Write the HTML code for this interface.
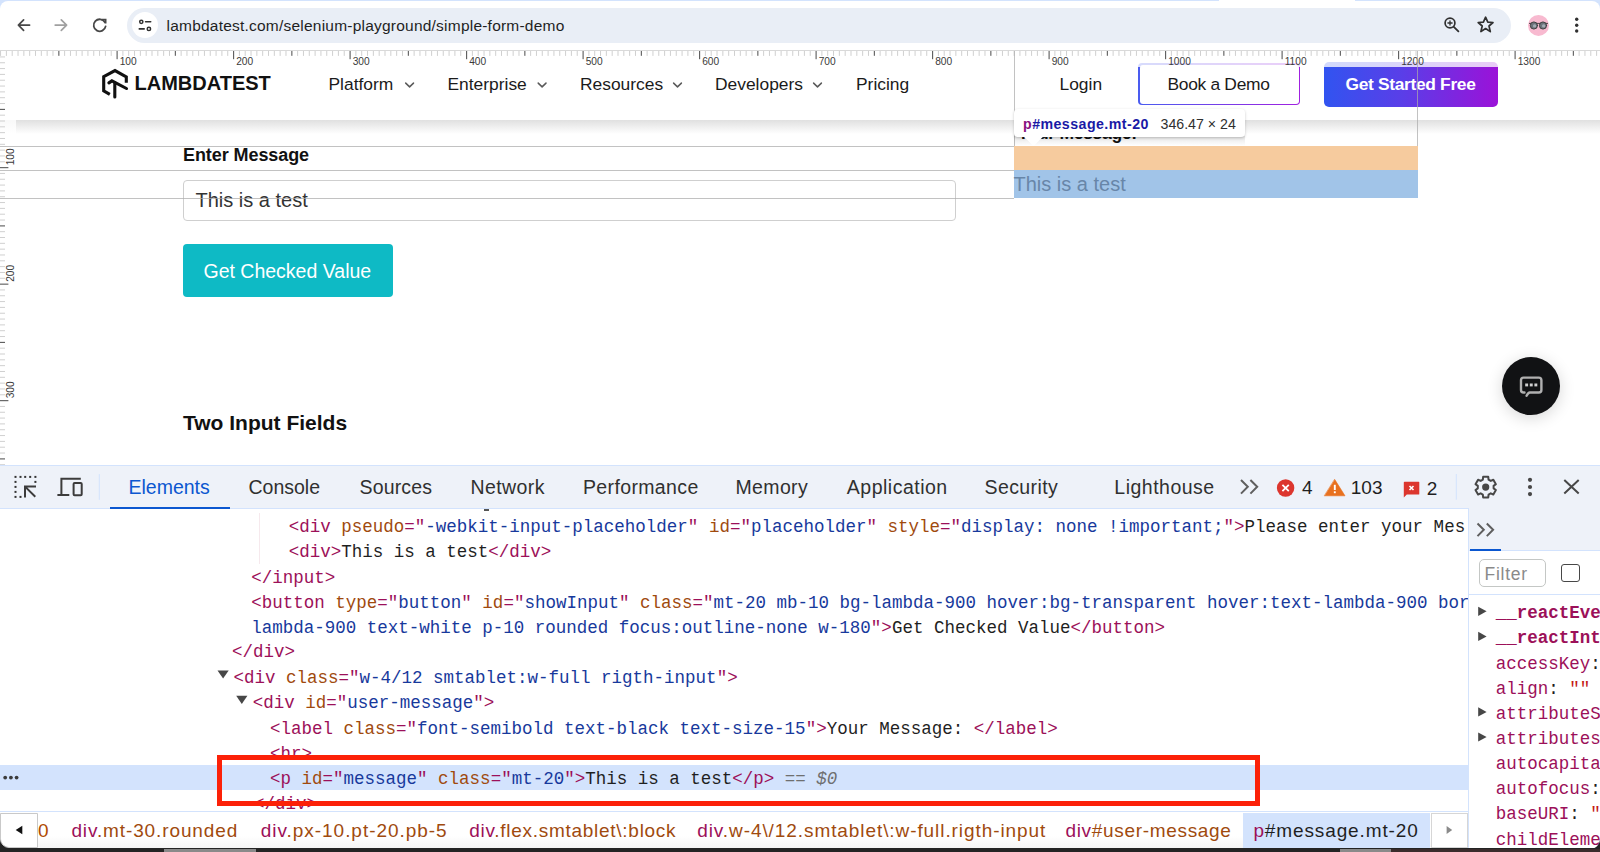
<!DOCTYPE html>
<html><head><meta charset="utf-8">
<style>
*{box-sizing:border-box;margin:0;padding:0}
html,body{width:1600px;height:852px;overflow:hidden;background:#fff}
body{position:relative;font-family:"Liberation Sans",sans-serif;color:#1f1f1f}
.a{position:absolute}
.t{position:absolute;white-space:pre;line-height:normal}
.m{position:absolute;white-space:pre;line-height:normal;font-family:"Liberation Mono",monospace;font-size:17.5px;color:#1f1f1f}
.tg{color:#9c1059}
.at{color:#a04a0e}
.av{color:#17399c}
svg{position:absolute;overflow:visible}
</style></head>
<body>
<!-- ============ BROWSER CHROME ============ -->
<div class="a" style="left:0;top:0;width:1600px;height:10px;background:#d3e3fd"></div>
<div class="a" style="left:0;top:1px;width:1600px;height:50px;background:#fff;border-radius:8px 8px 0 0"></div>
<div class="a" style="left:1218.5px;top:0;width:136px;height:2px;background:#fff"></div>
<div class="a" id="omni" style="left:127px;top:7.5px;width:1384px;height:35.5px;border-radius:18px;background:#e9eef6"></div>
<div class="a" style="left:131.5px;top:12.25px;width:26px;height:26px;border-radius:13px;background:#fff"></div>
<div class="t" id="url" style="left:166.5px;top:16.7px;font-size:15.5px;letter-spacing:0.22px;color:#1f1f1f">lambdatest.com/selenium-playground/simple-form-demo</div>

<!-- ============ PAGE ============ -->
<div id="page">
  <!-- header -->
  <div class="a" style="left:0;top:119.5px;width:1600px;height:14px;background:linear-gradient(#e0e0e0,rgba(255,255,255,0))"></div>
  <div class="t" id="logo" style="left:134.5px;top:71.6px;font-size:20px;font-weight:700;color:#111">LAMBDATEST</div>
  <div class="t nav" style="left:328.5px;top:74px;font-size:17.4px;color:#1b1b1b">Platform</div>
  <div class="t nav" style="left:447.5px;top:74px;font-size:17.4px;color:#1b1b1b">Enterprise</div>
  <div class="t nav" style="left:580px;top:74px;font-size:17.4px;color:#1b1b1b">Resources</div>
  <div class="t nav" style="left:715px;top:74px;font-size:17.4px;color:#1b1b1b">Developers</div>
  <div class="t nav" style="left:856px;top:74px;font-size:17.4px;color:#1b1b1b">Pricing</div>
  <div class="t" style="left:1059.5px;top:74px;font-size:17.4px;color:#1b1b1b">Login</div>
  <div class="a" style="left:1138px;top:63px;width:162px;height:42px;border-radius:4px;background:linear-gradient(90deg,#4a5cf0,#a020e0);padding:1.5px"><div style="width:100%;height:100%;background:#fff;border-radius:3px"></div></div>
  <div class="t" style="left:1167.5px;top:74px;font-size:17.4px;letter-spacing:-0.3px;color:#1b1b1b">Book a Demo</div>
  <div class="a" style="left:1324px;top:61.5px;width:174px;height:45px;border-radius:5px;background:linear-gradient(90deg,#3154f0,#5a3ee8 45%,#9b12d8)"></div>
  <div class="t" style="left:1345.5px;top:74px;font-size:17.4px;font-weight:700;letter-spacing:-0.33px;color:#fff">Get Started Free</div>

  <!-- content -->
  <div class="t" style="left:183px;top:145.2px;font-size:18px;font-weight:700;letter-spacing:-0.08px;color:#111">Enter Message</div>
  <div class="a" style="left:183px;top:180px;width:772.5px;height:40.5px;border:1px solid #cfcfcf;border-radius:4px"></div>
  <div class="t" style="left:195.5px;top:188.5px;font-size:20px;color:#333">This is a test</div>
  <div class="a" style="left:183px;top:244px;width:209.5px;height:53px;border-radius:4px;background:#0ebac5"></div>
  <div class="t" style="left:203.5px;top:259.5px;font-size:19.5px;color:#fff">Get Checked Value</div>
  <div class="t" style="left:183px;top:410.5px;font-size:21px;font-weight:700;color:#111">Two Input Fields</div>

  <!-- chat button -->
  <div class="a" style="left:1502.3px;top:357.3px;width:58px;height:58px;border-radius:50%;background:#111214;box-shadow:0 3px 16px rgba(0,0,0,0.16)"></div>
</div>

<!-- ============ INSPECT OVERLAY ============ -->
<div id="overlay">
<div class="a" style="left:0;top:50.5px;width:1600px;height:16.3px;background:rgba(255,255,255,0.78)"></div>
<div class="a" style="left:0;top:66.8px;width:16px;height:398px;background:rgba(255,255,255,0.78)"></div>
<svg style="left:0;top:0" width="1600" height="466" shape-rendering="auto"><rect x="0" y="50" width="1600" height="1" fill="#d9d9d9"/><rect x="0.05" y="51" width="1" height="4.9" fill="#d0d0d0"/><rect x="5.88" y="51" width="1" height="4.9" fill="#d0d0d0"/><rect x="11.70" y="51" width="1" height="4.9" fill="#d0d0d0"/><rect x="17.53" y="51" width="1" height="4.9" fill="#d0d0d0"/><rect x="23.35" y="51" width="1" height="4.9" fill="#d0d0d0"/><rect x="29.18" y="51" width="1" height="4.9" fill="#d0d0d0"/><rect x="35.00" y="51" width="1" height="4.9" fill="#d0d0d0"/><rect x="40.82" y="51" width="1" height="4.9" fill="#d0d0d0"/><rect x="46.65" y="51" width="1" height="4.9" fill="#d0d0d0"/><rect x="52.48" y="51" width="1" height="4.9" fill="#d0d0d0"/><rect x="58.30" y="51" width="1.1" height="4.8" fill="#5a5a5a"/><rect x="64.12" y="51" width="1" height="4.9" fill="#d0d0d0"/><rect x="69.95" y="51" width="1" height="4.9" fill="#d0d0d0"/><rect x="75.78" y="51" width="1" height="4.9" fill="#d0d0d0"/><rect x="81.60" y="51" width="1" height="4.9" fill="#d0d0d0"/><rect x="87.42" y="51" width="1" height="4.9" fill="#d0d0d0"/><rect x="93.25" y="51" width="1" height="4.9" fill="#d0d0d0"/><rect x="99.08" y="51" width="1" height="4.9" fill="#d0d0d0"/><rect x="104.90" y="51" width="1" height="4.9" fill="#d0d0d0"/><rect x="110.72" y="51" width="1" height="4.9" fill="#d0d0d0"/><rect x="116.55" y="51" width="1.1" height="8.2" fill="#5a5a5a"/><text x="119.65" y="64.6" font-family="Liberation Sans" font-size="10.2" fill="#3a3a3a">100</text><rect x="122.38" y="51" width="1" height="4.9" fill="#d0d0d0"/><rect x="128.20" y="51" width="1" height="4.9" fill="#d0d0d0"/><rect x="134.03" y="51" width="1" height="4.9" fill="#d0d0d0"/><rect x="139.85" y="51" width="1" height="4.9" fill="#d0d0d0"/><rect x="145.68" y="51" width="1" height="4.9" fill="#d0d0d0"/><rect x="151.50" y="51" width="1" height="4.9" fill="#d0d0d0"/><rect x="157.33" y="51" width="1" height="4.9" fill="#d0d0d0"/><rect x="163.15" y="51" width="1" height="4.9" fill="#d0d0d0"/><rect x="168.98" y="51" width="1" height="4.9" fill="#d0d0d0"/><rect x="174.80" y="51" width="1.1" height="4.8" fill="#5a5a5a"/><rect x="180.63" y="51" width="1" height="4.9" fill="#d0d0d0"/><rect x="186.45" y="51" width="1" height="4.9" fill="#d0d0d0"/><rect x="192.28" y="51" width="1" height="4.9" fill="#d0d0d0"/><rect x="198.10" y="51" width="1" height="4.9" fill="#d0d0d0"/><rect x="203.93" y="51" width="1" height="4.9" fill="#d0d0d0"/><rect x="209.75" y="51" width="1" height="4.9" fill="#d0d0d0"/><rect x="215.58" y="51" width="1" height="4.9" fill="#d0d0d0"/><rect x="221.40" y="51" width="1" height="4.9" fill="#d0d0d0"/><rect x="227.23" y="51" width="1" height="4.9" fill="#d0d0d0"/><rect x="233.05" y="51" width="1.1" height="8.2" fill="#5a5a5a"/><text x="236.15" y="64.6" font-family="Liberation Sans" font-size="10.2" fill="#3a3a3a">200</text><rect x="238.88" y="51" width="1" height="4.9" fill="#d0d0d0"/><rect x="244.70" y="51" width="1" height="4.9" fill="#d0d0d0"/><rect x="250.53" y="51" width="1" height="4.9" fill="#d0d0d0"/><rect x="256.35" y="51" width="1" height="4.9" fill="#d0d0d0"/><rect x="262.18" y="51" width="1" height="4.9" fill="#d0d0d0"/><rect x="268.00" y="51" width="1" height="4.9" fill="#d0d0d0"/><rect x="273.83" y="51" width="1" height="4.9" fill="#d0d0d0"/><rect x="279.65" y="51" width="1" height="4.9" fill="#d0d0d0"/><rect x="285.48" y="51" width="1" height="4.9" fill="#d0d0d0"/><rect x="291.30" y="51" width="1.1" height="4.8" fill="#5a5a5a"/><rect x="297.12" y="51" width="1" height="4.9" fill="#d0d0d0"/><rect x="302.95" y="51" width="1" height="4.9" fill="#d0d0d0"/><rect x="308.78" y="51" width="1" height="4.9" fill="#d0d0d0"/><rect x="314.60" y="51" width="1" height="4.9" fill="#d0d0d0"/><rect x="320.43" y="51" width="1" height="4.9" fill="#d0d0d0"/><rect x="326.25" y="51" width="1" height="4.9" fill="#d0d0d0"/><rect x="332.08" y="51" width="1" height="4.9" fill="#d0d0d0"/><rect x="337.90" y="51" width="1" height="4.9" fill="#d0d0d0"/><rect x="343.73" y="51" width="1" height="4.9" fill="#d0d0d0"/><rect x="349.55" y="51" width="1.1" height="8.2" fill="#5a5a5a"/><text x="352.65" y="64.6" font-family="Liberation Sans" font-size="10.2" fill="#3a3a3a">300</text><rect x="355.38" y="51" width="1" height="4.9" fill="#d0d0d0"/><rect x="361.20" y="51" width="1" height="4.9" fill="#d0d0d0"/><rect x="367.03" y="51" width="1" height="4.9" fill="#d0d0d0"/><rect x="372.85" y="51" width="1" height="4.9" fill="#d0d0d0"/><rect x="378.68" y="51" width="1" height="4.9" fill="#d0d0d0"/><rect x="384.50" y="51" width="1" height="4.9" fill="#d0d0d0"/><rect x="390.33" y="51" width="1" height="4.9" fill="#d0d0d0"/><rect x="396.15" y="51" width="1" height="4.9" fill="#d0d0d0"/><rect x="401.98" y="51" width="1" height="4.9" fill="#d0d0d0"/><rect x="407.80" y="51" width="1.1" height="4.8" fill="#5a5a5a"/><rect x="413.62" y="51" width="1" height="4.9" fill="#d0d0d0"/><rect x="419.45" y="51" width="1" height="4.9" fill="#d0d0d0"/><rect x="425.28" y="51" width="1" height="4.9" fill="#d0d0d0"/><rect x="431.10" y="51" width="1" height="4.9" fill="#d0d0d0"/><rect x="436.93" y="51" width="1" height="4.9" fill="#d0d0d0"/><rect x="442.75" y="51" width="1" height="4.9" fill="#d0d0d0"/><rect x="448.58" y="51" width="1" height="4.9" fill="#d0d0d0"/><rect x="454.40" y="51" width="1" height="4.9" fill="#d0d0d0"/><rect x="460.23" y="51" width="1" height="4.9" fill="#d0d0d0"/><rect x="466.05" y="51" width="1.1" height="8.2" fill="#5a5a5a"/><text x="469.15" y="64.6" font-family="Liberation Sans" font-size="10.2" fill="#3a3a3a">400</text><rect x="471.88" y="51" width="1" height="4.9" fill="#d0d0d0"/><rect x="477.70" y="51" width="1" height="4.9" fill="#d0d0d0"/><rect x="483.53" y="51" width="1" height="4.9" fill="#d0d0d0"/><rect x="489.35" y="51" width="1" height="4.9" fill="#d0d0d0"/><rect x="495.18" y="51" width="1" height="4.9" fill="#d0d0d0"/><rect x="501.00" y="51" width="1" height="4.9" fill="#d0d0d0"/><rect x="506.83" y="51" width="1" height="4.9" fill="#d0d0d0"/><rect x="512.65" y="51" width="1" height="4.9" fill="#d0d0d0"/><rect x="518.48" y="51" width="1" height="4.9" fill="#d0d0d0"/><rect x="524.30" y="51" width="1.1" height="4.8" fill="#5a5a5a"/><rect x="530.12" y="51" width="1" height="4.9" fill="#d0d0d0"/><rect x="535.95" y="51" width="1" height="4.9" fill="#d0d0d0"/><rect x="541.77" y="51" width="1" height="4.9" fill="#d0d0d0"/><rect x="547.60" y="51" width="1" height="4.9" fill="#d0d0d0"/><rect x="553.42" y="51" width="1" height="4.9" fill="#d0d0d0"/><rect x="559.25" y="51" width="1" height="4.9" fill="#d0d0d0"/><rect x="565.07" y="51" width="1" height="4.9" fill="#d0d0d0"/><rect x="570.90" y="51" width="1" height="4.9" fill="#d0d0d0"/><rect x="576.73" y="51" width="1" height="4.9" fill="#d0d0d0"/><rect x="582.55" y="51" width="1.1" height="8.2" fill="#5a5a5a"/><text x="585.65" y="64.6" font-family="Liberation Sans" font-size="10.2" fill="#3a3a3a">500</text><rect x="588.38" y="51" width="1" height="4.9" fill="#d0d0d0"/><rect x="594.20" y="51" width="1" height="4.9" fill="#d0d0d0"/><rect x="600.02" y="51" width="1" height="4.9" fill="#d0d0d0"/><rect x="605.85" y="51" width="1" height="4.9" fill="#d0d0d0"/><rect x="611.67" y="51" width="1" height="4.9" fill="#d0d0d0"/><rect x="617.50" y="51" width="1" height="4.9" fill="#d0d0d0"/><rect x="623.32" y="51" width="1" height="4.9" fill="#d0d0d0"/><rect x="629.15" y="51" width="1" height="4.9" fill="#d0d0d0"/><rect x="634.98" y="51" width="1" height="4.9" fill="#d0d0d0"/><rect x="640.80" y="51" width="1.1" height="4.8" fill="#5a5a5a"/><rect x="646.62" y="51" width="1" height="4.9" fill="#d0d0d0"/><rect x="652.45" y="51" width="1" height="4.9" fill="#d0d0d0"/><rect x="658.27" y="51" width="1" height="4.9" fill="#d0d0d0"/><rect x="664.10" y="51" width="1" height="4.9" fill="#d0d0d0"/><rect x="669.92" y="51" width="1" height="4.9" fill="#d0d0d0"/><rect x="675.75" y="51" width="1" height="4.9" fill="#d0d0d0"/><rect x="681.57" y="51" width="1" height="4.9" fill="#d0d0d0"/><rect x="687.40" y="51" width="1" height="4.9" fill="#d0d0d0"/><rect x="693.23" y="51" width="1" height="4.9" fill="#d0d0d0"/><rect x="699.05" y="51" width="1.1" height="8.2" fill="#5a5a5a"/><text x="702.15" y="64.6" font-family="Liberation Sans" font-size="10.2" fill="#3a3a3a">600</text><rect x="704.88" y="51" width="1" height="4.9" fill="#d0d0d0"/><rect x="710.70" y="51" width="1" height="4.9" fill="#d0d0d0"/><rect x="716.52" y="51" width="1" height="4.9" fill="#d0d0d0"/><rect x="722.35" y="51" width="1" height="4.9" fill="#d0d0d0"/><rect x="728.17" y="51" width="1" height="4.9" fill="#d0d0d0"/><rect x="734.00" y="51" width="1" height="4.9" fill="#d0d0d0"/><rect x="739.82" y="51" width="1" height="4.9" fill="#d0d0d0"/><rect x="745.65" y="51" width="1" height="4.9" fill="#d0d0d0"/><rect x="751.48" y="51" width="1" height="4.9" fill="#d0d0d0"/><rect x="757.30" y="51" width="1.1" height="4.8" fill="#5a5a5a"/><rect x="763.12" y="51" width="1" height="4.9" fill="#d0d0d0"/><rect x="768.95" y="51" width="1" height="4.9" fill="#d0d0d0"/><rect x="774.77" y="51" width="1" height="4.9" fill="#d0d0d0"/><rect x="780.60" y="51" width="1" height="4.9" fill="#d0d0d0"/><rect x="786.42" y="51" width="1" height="4.9" fill="#d0d0d0"/><rect x="792.25" y="51" width="1" height="4.9" fill="#d0d0d0"/><rect x="798.07" y="51" width="1" height="4.9" fill="#d0d0d0"/><rect x="803.90" y="51" width="1" height="4.9" fill="#d0d0d0"/><rect x="809.73" y="51" width="1" height="4.9" fill="#d0d0d0"/><rect x="815.55" y="51" width="1.1" height="8.2" fill="#5a5a5a"/><text x="818.65" y="64.6" font-family="Liberation Sans" font-size="10.2" fill="#3a3a3a">700</text><rect x="821.38" y="51" width="1" height="4.9" fill="#d0d0d0"/><rect x="827.20" y="51" width="1" height="4.9" fill="#d0d0d0"/><rect x="833.02" y="51" width="1" height="4.9" fill="#d0d0d0"/><rect x="838.85" y="51" width="1" height="4.9" fill="#d0d0d0"/><rect x="844.67" y="51" width="1" height="4.9" fill="#d0d0d0"/><rect x="850.50" y="51" width="1" height="4.9" fill="#d0d0d0"/><rect x="856.32" y="51" width="1" height="4.9" fill="#d0d0d0"/><rect x="862.15" y="51" width="1" height="4.9" fill="#d0d0d0"/><rect x="867.98" y="51" width="1" height="4.9" fill="#d0d0d0"/><rect x="873.80" y="51" width="1.1" height="4.8" fill="#5a5a5a"/><rect x="879.62" y="51" width="1" height="4.9" fill="#d0d0d0"/><rect x="885.45" y="51" width="1" height="4.9" fill="#d0d0d0"/><rect x="891.27" y="51" width="1" height="4.9" fill="#d0d0d0"/><rect x="897.10" y="51" width="1" height="4.9" fill="#d0d0d0"/><rect x="902.92" y="51" width="1" height="4.9" fill="#d0d0d0"/><rect x="908.75" y="51" width="1" height="4.9" fill="#d0d0d0"/><rect x="914.57" y="51" width="1" height="4.9" fill="#d0d0d0"/><rect x="920.40" y="51" width="1" height="4.9" fill="#d0d0d0"/><rect x="926.23" y="51" width="1" height="4.9" fill="#d0d0d0"/><rect x="932.05" y="51" width="1.1" height="8.2" fill="#5a5a5a"/><text x="935.15" y="64.6" font-family="Liberation Sans" font-size="10.2" fill="#3a3a3a">800</text><rect x="937.88" y="51" width="1" height="4.9" fill="#d0d0d0"/><rect x="943.70" y="51" width="1" height="4.9" fill="#d0d0d0"/><rect x="949.52" y="51" width="1" height="4.9" fill="#d0d0d0"/><rect x="955.35" y="51" width="1" height="4.9" fill="#d0d0d0"/><rect x="961.17" y="51" width="1" height="4.9" fill="#d0d0d0"/><rect x="967.00" y="51" width="1" height="4.9" fill="#d0d0d0"/><rect x="972.82" y="51" width="1" height="4.9" fill="#d0d0d0"/><rect x="978.65" y="51" width="1" height="4.9" fill="#d0d0d0"/><rect x="984.48" y="51" width="1" height="4.9" fill="#d0d0d0"/><rect x="990.30" y="51" width="1.1" height="4.8" fill="#5a5a5a"/><rect x="996.12" y="51" width="1" height="4.9" fill="#d0d0d0"/><rect x="1001.95" y="51" width="1" height="4.9" fill="#d0d0d0"/><rect x="1007.77" y="51" width="1" height="4.9" fill="#d0d0d0"/><rect x="1013.60" y="51" width="1" height="4.9" fill="#d0d0d0"/><rect x="1019.42" y="51" width="1" height="4.9" fill="#d0d0d0"/><rect x="1025.25" y="51" width="1" height="4.9" fill="#d0d0d0"/><rect x="1031.08" y="51" width="1" height="4.9" fill="#d0d0d0"/><rect x="1036.90" y="51" width="1" height="4.9" fill="#d0d0d0"/><rect x="1042.72" y="51" width="1" height="4.9" fill="#d0d0d0"/><rect x="1048.55" y="51" width="1.1" height="8.2" fill="#5a5a5a"/><text x="1051.65" y="64.6" font-family="Liberation Sans" font-size="10.2" fill="#3a3a3a">900</text><rect x="1054.38" y="51" width="1" height="4.9" fill="#d0d0d0"/><rect x="1060.20" y="51" width="1" height="4.9" fill="#d0d0d0"/><rect x="1066.03" y="51" width="1" height="4.9" fill="#d0d0d0"/><rect x="1071.85" y="51" width="1" height="4.9" fill="#d0d0d0"/><rect x="1077.67" y="51" width="1" height="4.9" fill="#d0d0d0"/><rect x="1083.50" y="51" width="1" height="4.9" fill="#d0d0d0"/><rect x="1089.33" y="51" width="1" height="4.9" fill="#d0d0d0"/><rect x="1095.15" y="51" width="1" height="4.9" fill="#d0d0d0"/><rect x="1100.97" y="51" width="1" height="4.9" fill="#d0d0d0"/><rect x="1106.80" y="51" width="1.1" height="4.8" fill="#5a5a5a"/><rect x="1112.62" y="51" width="1" height="4.9" fill="#d0d0d0"/><rect x="1118.45" y="51" width="1" height="4.9" fill="#d0d0d0"/><rect x="1124.28" y="51" width="1" height="4.9" fill="#d0d0d0"/><rect x="1130.10" y="51" width="1" height="4.9" fill="#d0d0d0"/><rect x="1135.92" y="51" width="1" height="4.9" fill="#d0d0d0"/><rect x="1141.75" y="51" width="1" height="4.9" fill="#d0d0d0"/><rect x="1147.58" y="51" width="1" height="4.9" fill="#d0d0d0"/><rect x="1153.40" y="51" width="1" height="4.9" fill="#d0d0d0"/><rect x="1159.22" y="51" width="1" height="4.9" fill="#d0d0d0"/><rect x="1165.05" y="51" width="1.1" height="8.2" fill="#5a5a5a"/><text x="1168.15" y="64.6" font-family="Liberation Sans" font-size="10.2" fill="#3a3a3a">1000</text><rect x="1170.88" y="51" width="1" height="4.9" fill="#d0d0d0"/><rect x="1176.70" y="51" width="1" height="4.9" fill="#d0d0d0"/><rect x="1182.53" y="51" width="1" height="4.9" fill="#d0d0d0"/><rect x="1188.35" y="51" width="1" height="4.9" fill="#d0d0d0"/><rect x="1194.17" y="51" width="1" height="4.9" fill="#d0d0d0"/><rect x="1200.00" y="51" width="1" height="4.9" fill="#d0d0d0"/><rect x="1205.83" y="51" width="1" height="4.9" fill="#d0d0d0"/><rect x="1211.65" y="51" width="1" height="4.9" fill="#d0d0d0"/><rect x="1217.47" y="51" width="1" height="4.9" fill="#d0d0d0"/><rect x="1223.30" y="51" width="1.1" height="4.8" fill="#5a5a5a"/><rect x="1229.12" y="51" width="1" height="4.9" fill="#d0d0d0"/><rect x="1234.95" y="51" width="1" height="4.9" fill="#d0d0d0"/><rect x="1240.78" y="51" width="1" height="4.9" fill="#d0d0d0"/><rect x="1246.60" y="51" width="1" height="4.9" fill="#d0d0d0"/><rect x="1252.42" y="51" width="1" height="4.9" fill="#d0d0d0"/><rect x="1258.25" y="51" width="1" height="4.9" fill="#d0d0d0"/><rect x="1264.08" y="51" width="1" height="4.9" fill="#d0d0d0"/><rect x="1269.90" y="51" width="1" height="4.9" fill="#d0d0d0"/><rect x="1275.72" y="51" width="1" height="4.9" fill="#d0d0d0"/><rect x="1281.55" y="51" width="1.1" height="8.2" fill="#5a5a5a"/><text x="1284.65" y="64.6" font-family="Liberation Sans" font-size="10.2" fill="#3a3a3a">1100</text><rect x="1287.38" y="51" width="1" height="4.9" fill="#d0d0d0"/><rect x="1293.20" y="51" width="1" height="4.9" fill="#d0d0d0"/><rect x="1299.03" y="51" width="1" height="4.9" fill="#d0d0d0"/><rect x="1304.85" y="51" width="1" height="4.9" fill="#d0d0d0"/><rect x="1310.67" y="51" width="1" height="4.9" fill="#d0d0d0"/><rect x="1316.50" y="51" width="1" height="4.9" fill="#d0d0d0"/><rect x="1322.33" y="51" width="1" height="4.9" fill="#d0d0d0"/><rect x="1328.15" y="51" width="1" height="4.9" fill="#d0d0d0"/><rect x="1333.97" y="51" width="1" height="4.9" fill="#d0d0d0"/><rect x="1339.80" y="51" width="1.1" height="4.8" fill="#5a5a5a"/><rect x="1345.62" y="51" width="1" height="4.9" fill="#d0d0d0"/><rect x="1351.45" y="51" width="1" height="4.9" fill="#d0d0d0"/><rect x="1357.28" y="51" width="1" height="4.9" fill="#d0d0d0"/><rect x="1363.10" y="51" width="1" height="4.9" fill="#d0d0d0"/><rect x="1368.92" y="51" width="1" height="4.9" fill="#d0d0d0"/><rect x="1374.75" y="51" width="1" height="4.9" fill="#d0d0d0"/><rect x="1380.58" y="51" width="1" height="4.9" fill="#d0d0d0"/><rect x="1386.40" y="51" width="1" height="4.9" fill="#d0d0d0"/><rect x="1392.22" y="51" width="1" height="4.9" fill="#d0d0d0"/><rect x="1398.05" y="51" width="1.1" height="8.2" fill="#5a5a5a"/><text x="1401.15" y="64.6" font-family="Liberation Sans" font-size="10.2" fill="#3a3a3a">1200</text><rect x="1403.88" y="51" width="1" height="4.9" fill="#d0d0d0"/><rect x="1409.70" y="51" width="1" height="4.9" fill="#d0d0d0"/><rect x="1415.53" y="51" width="1" height="4.9" fill="#d0d0d0"/><rect x="1421.35" y="51" width="1" height="4.9" fill="#d0d0d0"/><rect x="1427.17" y="51" width="1" height="4.9" fill="#d0d0d0"/><rect x="1433.00" y="51" width="1" height="4.9" fill="#d0d0d0"/><rect x="1438.83" y="51" width="1" height="4.9" fill="#d0d0d0"/><rect x="1444.65" y="51" width="1" height="4.9" fill="#d0d0d0"/><rect x="1450.47" y="51" width="1" height="4.9" fill="#d0d0d0"/><rect x="1456.30" y="51" width="1.1" height="4.8" fill="#5a5a5a"/><rect x="1462.12" y="51" width="1" height="4.9" fill="#d0d0d0"/><rect x="1467.95" y="51" width="1" height="4.9" fill="#d0d0d0"/><rect x="1473.78" y="51" width="1" height="4.9" fill="#d0d0d0"/><rect x="1479.60" y="51" width="1" height="4.9" fill="#d0d0d0"/><rect x="1485.42" y="51" width="1" height="4.9" fill="#d0d0d0"/><rect x="1491.25" y="51" width="1" height="4.9" fill="#d0d0d0"/><rect x="1497.08" y="51" width="1" height="4.9" fill="#d0d0d0"/><rect x="1502.90" y="51" width="1" height="4.9" fill="#d0d0d0"/><rect x="1508.72" y="51" width="1" height="4.9" fill="#d0d0d0"/><rect x="1514.55" y="51" width="1.1" height="8.2" fill="#5a5a5a"/><text x="1517.65" y="64.6" font-family="Liberation Sans" font-size="10.2" fill="#3a3a3a">1300</text><rect x="1520.38" y="51" width="1" height="4.9" fill="#d0d0d0"/><rect x="1526.20" y="51" width="1" height="4.9" fill="#d0d0d0"/><rect x="1532.03" y="51" width="1" height="4.9" fill="#d0d0d0"/><rect x="1537.85" y="51" width="1" height="4.9" fill="#d0d0d0"/><rect x="1543.67" y="51" width="1" height="4.9" fill="#d0d0d0"/><rect x="1549.50" y="51" width="1" height="4.9" fill="#d0d0d0"/><rect x="1555.33" y="51" width="1" height="4.9" fill="#d0d0d0"/><rect x="1561.15" y="51" width="1" height="4.9" fill="#d0d0d0"/><rect x="1566.97" y="51" width="1" height="4.9" fill="#d0d0d0"/><rect x="1572.80" y="51" width="1.1" height="4.8" fill="#5a5a5a"/><rect x="1578.62" y="51" width="1" height="4.9" fill="#d0d0d0"/><rect x="1584.45" y="51" width="1" height="4.9" fill="#d0d0d0"/><rect x="1590.28" y="51" width="1" height="4.9" fill="#d0d0d0"/><rect x="1596.10" y="51" width="1" height="4.9" fill="#d0d0d0"/><rect x="0" y="56.43" width="5" height="1" fill="#d0d0d0"/><rect x="0" y="62.25" width="5" height="1" fill="#d0d0d0"/><rect x="0" y="68.08" width="5" height="1" fill="#d0d0d0"/><rect x="0" y="73.90" width="5" height="1" fill="#d0d0d0"/><rect x="0" y="79.72" width="5" height="1" fill="#d0d0d0"/><rect x="0" y="85.55" width="5" height="1" fill="#d0d0d0"/><rect x="0" y="91.38" width="5" height="1" fill="#d0d0d0"/><rect x="0" y="97.20" width="5" height="1" fill="#d0d0d0"/><rect x="0" y="103.03" width="5" height="1" fill="#d0d0d0"/><rect x="0" y="108.85" width="5" height="1.1" fill="#5a5a5a"/><rect x="0" y="114.68" width="5" height="1" fill="#d0d0d0"/><rect x="0" y="120.50" width="5" height="1" fill="#d0d0d0"/><rect x="0" y="126.33" width="5" height="1" fill="#d0d0d0"/><rect x="0" y="132.15" width="5" height="1" fill="#d0d0d0"/><rect x="0" y="137.97" width="5" height="1" fill="#d0d0d0"/><rect x="0" y="143.80" width="5" height="1" fill="#d0d0d0"/><rect x="0" y="149.62" width="5" height="1" fill="#d0d0d0"/><rect x="0" y="155.45" width="5" height="1" fill="#d0d0d0"/><rect x="0" y="161.28" width="5" height="1" fill="#d0d0d0"/><rect x="0" y="167.10" width="8.4" height="1.1" fill="#5a5a5a"/><text transform="translate(14.2 165.30) rotate(-90)" font-family="Liberation Sans" font-size="10.2" fill="#3a3a3a">100</text><rect x="0" y="172.93" width="5" height="1" fill="#d0d0d0"/><rect x="0" y="178.75" width="5" height="1" fill="#d0d0d0"/><rect x="0" y="184.57" width="5" height="1" fill="#d0d0d0"/><rect x="0" y="190.40" width="5" height="1" fill="#d0d0d0"/><rect x="0" y="196.22" width="5" height="1" fill="#d0d0d0"/><rect x="0" y="202.05" width="5" height="1" fill="#d0d0d0"/><rect x="0" y="207.88" width="5" height="1" fill="#d0d0d0"/><rect x="0" y="213.70" width="5" height="1" fill="#d0d0d0"/><rect x="0" y="219.53" width="5" height="1" fill="#d0d0d0"/><rect x="0" y="225.35" width="5" height="1.1" fill="#5a5a5a"/><rect x="0" y="231.18" width="5" height="1" fill="#d0d0d0"/><rect x="0" y="237.00" width="5" height="1" fill="#d0d0d0"/><rect x="0" y="242.82" width="5" height="1" fill="#d0d0d0"/><rect x="0" y="248.65" width="5" height="1" fill="#d0d0d0"/><rect x="0" y="254.47" width="5" height="1" fill="#d0d0d0"/><rect x="0" y="260.30" width="5" height="1" fill="#d0d0d0"/><rect x="0" y="266.12" width="5" height="1" fill="#d0d0d0"/><rect x="0" y="271.95" width="5" height="1" fill="#d0d0d0"/><rect x="0" y="277.78" width="5" height="1" fill="#d0d0d0"/><rect x="0" y="283.60" width="8.4" height="1.1" fill="#5a5a5a"/><text transform="translate(14.2 281.80) rotate(-90)" font-family="Liberation Sans" font-size="10.2" fill="#3a3a3a">200</text><rect x="0" y="289.43" width="5" height="1" fill="#d0d0d0"/><rect x="0" y="295.25" width="5" height="1" fill="#d0d0d0"/><rect x="0" y="301.07" width="5" height="1" fill="#d0d0d0"/><rect x="0" y="306.90" width="5" height="1" fill="#d0d0d0"/><rect x="0" y="312.73" width="5" height="1" fill="#d0d0d0"/><rect x="0" y="318.55" width="5" height="1" fill="#d0d0d0"/><rect x="0" y="324.38" width="5" height="1" fill="#d0d0d0"/><rect x="0" y="330.20" width="5" height="1" fill="#d0d0d0"/><rect x="0" y="336.03" width="5" height="1" fill="#d0d0d0"/><rect x="0" y="341.85" width="5" height="1.1" fill="#5a5a5a"/><rect x="0" y="347.68" width="5" height="1" fill="#d0d0d0"/><rect x="0" y="353.50" width="5" height="1" fill="#d0d0d0"/><rect x="0" y="359.33" width="5" height="1" fill="#d0d0d0"/><rect x="0" y="365.15" width="5" height="1" fill="#d0d0d0"/><rect x="0" y="370.98" width="5" height="1" fill="#d0d0d0"/><rect x="0" y="376.80" width="5" height="1" fill="#d0d0d0"/><rect x="0" y="382.63" width="5" height="1" fill="#d0d0d0"/><rect x="0" y="388.45" width="5" height="1" fill="#d0d0d0"/><rect x="0" y="394.28" width="5" height="1" fill="#d0d0d0"/><rect x="0" y="400.10" width="8.4" height="1.1" fill="#5a5a5a"/><text transform="translate(14.2 398.30) rotate(-90)" font-family="Liberation Sans" font-size="10.2" fill="#3a3a3a">300</text><rect x="0" y="405.93" width="5" height="1" fill="#d0d0d0"/><rect x="0" y="411.75" width="5" height="1" fill="#d0d0d0"/><rect x="0" y="417.58" width="5" height="1" fill="#d0d0d0"/><rect x="0" y="423.40" width="5" height="1" fill="#d0d0d0"/><rect x="0" y="429.23" width="5" height="1" fill="#d0d0d0"/><rect x="0" y="435.05" width="5" height="1" fill="#d0d0d0"/><rect x="0" y="440.88" width="5" height="1" fill="#d0d0d0"/><rect x="0" y="446.70" width="5" height="1" fill="#d0d0d0"/><rect x="0" y="452.53" width="5" height="1" fill="#d0d0d0"/><rect x="0" y="458.35" width="5" height="1.1" fill="#5a5a5a"/><rect x="0" y="464.18" width="5" height="1" fill="#d0d0d0"/></svg>
  <div class="a" style="left:1014px;top:146px;width:403.5px;height:24px;background:#f6cb9e"></div>
  <div class="a" style="left:1014px;top:170px;width:403.5px;height:27.8px;background:#a1c4e8"></div>
  <div class="t" style="left:1013.5px;top:173.2px;font-size:20px;color:#6886a8">This is a test</div>
  <!-- guides -->
  <div class="a" style="left:0;top:146px;width:1014px;height:1px;background:rgba(170,170,170,0.72)"></div>
  <div class="a" style="left:0;top:169.5px;width:1014px;height:1px;background:rgba(170,170,170,0.72)"></div>
  <div class="a" style="left:0;top:197.5px;width:1014px;height:1px;background:rgba(170,170,170,0.72)"></div>
  <div class="a" style="left:1014px;top:51px;width:1px;height:95px;background:rgba(170,170,170,0.72)"></div>
  <div class="a" style="left:1417px;top:51px;width:1px;height:95px;background:rgba(170,170,170,0.72)"></div>
  <!-- tooltip -->
  <div class="a" style="left:1014px;top:136px;width:403px;height:10px;overflow:hidden"><div class="t" style="left:3.5px;top:-13.1px;font-size:17.5px;font-weight:700;color:#111;letter-spacing:-0.3px">Your Message:</div></div>
  <div class="a" style="left:1014px;top:136px;width:231px;height:10px;background:linear-gradient(rgba(0,0,0,0.10),rgba(0,0,0,0))"></div>
  <div class="a" style="left:1014px;top:109px;width:231px;height:27.5px;background:#fff;border-radius:4px;box-shadow:0 1px 3px rgba(0,0,0,0.22)"></div>
  <svg style="left:0;top:0" width="1600" height="200"><path d="M1023.2 136 L1033.5 146 L1043.8 136 Z" fill="#fff"/></svg>
  <div class="t" style="left:1023px;top:115.8px;font-size:14.2px;font-weight:700;color:#1a1aa6;letter-spacing:0.45px"><span style="color:#881280">p</span>#message.mt-20</div>
  <div class="t" style="left:1160.5px;top:115.8px;font-size:14.2px;color:#303030">346.47 × 24</div>
</div>

<!-- ============ DEVTOOLS ============ -->
<div id="devtools">
  <div class="a" style="left:0;top:465px;width:1600px;height:44px;background:#eef2f9;border-top:1px solid #d3e3fd;border-bottom:1px solid #d3e3fd"></div>
  <div class="a" style="left:109.5px;top:506.5px;width:120.5px;height:2.2px;background:#0b57d0"></div>
  <div class="t" style="left:128.5px;top:476px;font-size:19.5px;color:#0b57d0">Elements</div>
  <div class="t" style="left:248.5px;top:476px;font-size:19.5px;color:#303030">Console</div>
  <div class="t" style="left:359.5px;top:476px;font-size:19.5px;letter-spacing:0.15px;color:#303030">Sources</div>
  <div class="t" style="left:470.5px;top:476px;font-size:19.5px;letter-spacing:0.42px;color:#303030">Network</div>
  <div class="t" style="left:583px;top:476px;font-size:19.5px;letter-spacing:0.36px;color:#303030">Performance</div>
  <div class="t" style="left:735.5px;top:476px;font-size:19.5px;letter-spacing:0.35px;color:#303030">Memory</div>
  <div class="t" style="left:846.8px;top:476px;font-size:19.5px;letter-spacing:0.5px;color:#303030">Application</div>
  <div class="t" style="left:984.5px;top:476px;font-size:19.5px;letter-spacing:0.4px;color:#303030">Security</div>
  <div class="t" style="left:1114.3px;top:476px;font-size:19.5px;letter-spacing:0.5px;color:#303030">Lighthouse</div>
  <div class="t" style="left:1302px;top:477.3px;font-size:19px;color:#1f1f1f">4</div>
  <div class="t" style="left:1350.8px;top:477.3px;font-size:19px;color:#1f1f1f">103</div>
  <div class="t" style="left:1426.8px;top:478.3px;font-size:19px;color:#1f1f1f">2</div>
  <!-- dom area -->
  <div class="a" style="left:0;top:764.75px;width:1468px;height:25px;background:#d3e3fd"></div>
  <div class="a" style="left:259px;top:512.5px;width:1px;height:51px;background:#f6e9ed"></div>
  <div class="a" style="left:483.5px;top:509.2px;width:5px;height:1.4px;background:#555"></div>
  <svg style="left:0;top:0" width="1600" height="852">
    <circle cx="5.2" cy="777.6" r="1.9" fill="#3c3c3c"/><circle cx="10.9" cy="777.6" r="1.9" fill="#3c3c3c"/><circle cx="16.6" cy="777.6" r="1.9" fill="#3c3c3c"/>
    <path d="M217.5 670.4 L228.7 670.4 L223.1 678.6 Z" fill="#474747"/>
    <path d="M236.2 695.8 L247.4 695.8 L241.8 704 Z" fill="#474747"/>
  </svg>
  <div class="m" style="left:288.75px;top:516.98px"><span class="tg">&lt;div</span> <span class="at">pseudo</span><span class="tg">="</span><span class="av">-webkit-input-placeholder</span><span class="tg">"</span> <span class="at">id</span><span class="tg">="</span><span class="av">placeholder</span><span class="tg">"</span> <span class="at">style</span><span class="tg">="</span><span class="av">display: none !important;</span><span class="tg">"</span><span class="tg">&gt;</span>Please enter your Mes</div>
  <div class="m" style="left:288.75px;top:542.48px"><span class="tg">&lt;div&gt;</span>This is a test<span class="tg">&lt;/div&gt;</span></div>
  <div class="m" style="left:251.25px;top:567.98px"><span class="tg">&lt;/input&gt;</span></div>
  <div class="m" style="left:251.25px;top:592.98px"><span class="tg">&lt;button</span> <span class="at">type</span><span class="tg">="</span><span class="av">button</span><span class="tg">"</span> <span class="at">id</span><span class="tg">="</span><span class="av">showInput</span><span class="tg">"</span> <span class="at">class</span><span class="tg">="</span><span class="av">mt-20 mb-10 bg-lambda-900 hover:bg-transparent hover:text-lambda-900 bor</span></div>
  <div class="m" style="left:251.25px;top:617.98px"><span class="av">lambda-900 text-white p-10 rounded focus:outline-none w-180</span><span class="tg">"&gt;</span>Get Checked Value<span class="tg">&lt;/button&gt;</span></div>
  <div class="m" style="left:232.0px;top:642.48px"><span class="tg">&lt;/div&gt;</span></div>
  <div class="m" style="left:233.5px;top:667.98px"><span class="tg">&lt;div</span> <span class="at">class</span><span class="tg">="</span><span class="av">w-4/12 smtablet:w-full rigth-input</span><span class="tg">"</span><span class="tg">&gt;</span></div>
  <div class="m" style="left:252.75px;top:693.38px"><span class="tg">&lt;div</span> <span class="at">id</span><span class="tg">="</span><span class="av">user-message</span><span class="tg">"</span><span class="tg">&gt;</span></div>
  <div class="m" style="left:270.0px;top:718.58px"><span class="tg">&lt;label</span> <span class="at">class</span><span class="tg">="</span><span class="av">font-semibold text-black text-size-15</span><span class="tg">"</span><span class="tg">&gt;</span>Your Message: <span class="tg">&lt;/label&gt;</span></div>
  <div class="m" style="left:270.0px;top:743.88px"><span class="tg">&lt;hr&gt;</span></div>
  <div class="m" style="left:270.0px;top:768.98px"><span class="tg">&lt;p</span> <span class="at">id</span><span class="tg">="</span><span class="av">message</span><span class="tg">"</span> <span class="at">class</span><span class="tg">="</span><span class="av">mt-20</span><span class="tg">"</span><span class="tg">&gt;</span>This is a test<span class="tg">&lt;/p&gt;</span> <span style="color:#6f6f6f">== <i>$0</i></span></div>
  <div class="m" style="left:254.0px;top:794.27px"><span class="tg">&lt;/div&gt;</span></div>
  <div class="a" style="left:217.3px;top:755.3px;width:1042.7px;height:50.5px;border:5.1px solid #fc2108"></div>
  <!-- right panel -->
  <div class="a" style="left:1468px;top:508px;width:132px;height:344px;background:#fff;border-left:1.2px solid #d3e3fd"></div>
  <div class="a" style="left:1469px;top:508px;width:131px;height:43px;background:#eef2f9;border-bottom:1px solid #d3e3fd"></div>
  <div class="a" style="left:1469.5px;top:549px;width:31.5px;height:2.2px;background:#0b57d0"></div>
  <div class="a" style="left:1478.5px;top:558.8px;width:67.5px;height:28.5px;border:1.2px solid #c4c7c5;border-radius:5px;background:#fff"></div>
  <div class="t" style="left:1484.5px;top:564.3px;font-size:17.5px;letter-spacing:0.75px;color:#8a8a8a">Filter</div>
  <div class="a" style="left:1561px;top:563.7px;width:19px;height:18.5px;border:1.6px solid #474747;border-radius:3px"></div>
  <div class="a" style="left:1469px;top:593.5px;width:131px;height:1px;background:#d3e3fd"></div>
  <!-- breadcrumb bar -->
  <div class="a" style="left:0;top:811px;width:1468px;height:41px;background:linear-gradient(#fff 60%,#f1f1f1);border-top:1.5px solid #d3e3fd"></div>
  <div class="a" style="left:1243px;top:812.5px;width:187.3px;height:35.5px;background:#d3e3fd"></div>
  <div class="a" style="left:0;top:836px;width:12px;height:13px;background:#242424"></div>
  <div class="a" style="left:0;top:813px;width:38px;height:35px;background:#fff;border:1.3px solid #c9c9c9;border-top-width:1.3px;border-radius:0 0 0 9px"></div>
  <svg style="left:0;top:0" width="1600" height="852"><path d="M15.7 830 L22.3 825.7 L22.3 834.2 Z" fill="#111"/></svg>
  <div class="t" style="left:38px;top:820.4px;font-size:19px;color:#b04a00">0</div>
  <div class="t" style="left:71.4px;top:820.42px;font-size:19px;letter-spacing:0.882px;color:#a04a0e"><span style="color:#9c1059">div</span>.mt-30.rounded</div>
  <div class="t" style="left:260.8px;top:820.42px;font-size:19px;letter-spacing:0.960px;color:#a04a0e"><span style="color:#9c1059">div</span>.px-10.pt-20.pb-5</div>
  <div class="t" style="left:469.2px;top:820.42px;font-size:19px;letter-spacing:0.725px;color:#a04a0e"><span style="color:#9c1059">div</span>.flex.smtablet\:block</div>
  <div class="t" style="left:697.2px;top:820.42px;font-size:19px;letter-spacing:0.920px;color:#a04a0e"><span style="color:#9c1059">div</span>.w-4\/12.smtablet\:w-full.rigth-input</div>
  <div class="t" style="left:1065.45px;top:820.42px;font-size:19px;letter-spacing:0.681px;color:#a04a0e"><span style="color:#9c1059">div</span>#user-message</div>
  <div class="t" style="left:1253.4px;top:820.42px;font-size:19px;letter-spacing:0.880px;color:#1f1f1f"><span style="color:#9c1059">p</span>#message.mt-20</div>
  <div class="a" style="left:1431px;top:813px;width:36.5px;height:35px;background:#fff;border:1.3px solid #d6d6d6"></div>
  <svg style="left:0;top:0" width="1600" height="852"><path d="M1446.6 825.9 L1452.2 829.9 L1446.6 833.9 Z" fill="#8a8a8a"/></svg>
  <div class="a" style="left:0;top:848.3px;width:1600px;height:4px;background:#242424"></div>
  <div class="a" style="left:164px;top:848.6px;width:92px;height:3.4px;background:#8a8a8a"></div>
  <div class="a" style="left:1340px;top:848.6px;width:51px;height:3.4px;background:#8a8a8a"></div>
  <div class="a" style="left:1391px;top:848.6px;width:209px;height:3.4px;background:#3a2c2c"></div>
  <div class="a" style="left:1469px;top:595px;width:131px;height:253px;overflow:hidden">
    <div class="m" style="left:26.7px;top:8.27px;font-weight:700;"><span class="tg">__reactEventHandlers</span></div>
    <div class="m" style="left:26.7px;top:33.42px;font-weight:700;"><span class="tg">__reactInternalInstance</span></div>
    <div class="m" style="left:26.7px;top:58.57px;"><span class="tg">accessKey</span>: <span style="color:#c41a16">""</span></div>
    <div class="m" style="left:26.7px;top:83.73px;"><span class="tg">align</span>: <span style="color:#c41a16">""</span></div>
    <div class="m" style="left:26.7px;top:108.88px;"><span class="tg">attributeStyleMap</span></div>
    <div class="m" style="left:26.7px;top:134.02px;"><span class="tg">attributes</span></div>
    <div class="m" style="left:26.7px;top:159.17px;"><span class="tg">autocapitalize</span></div>
    <div class="m" style="left:26.7px;top:184.32px;"><span class="tg">autofocus</span>: <span style="color:#c41a16">false</span></div>
    <div class="m" style="left:26.7px;top:209.48px;"><span class="tg">baseURI</span>: <span style="color:#c41a16">"file</span></div>
    <div class="m" style="left:26.7px;top:234.62px;"><span class="tg">childElementCount</span></div>
  </div>
  <svg style="left:0;top:0" width="1600" height="852"><path d="M1478.2 606.7 L1486.6 611.3 L1478.2 615.9 Z" fill="#474747"/><path d="M1478.2 631.8 L1486.6 636.4 L1478.2 641.0 Z" fill="#474747"/><path d="M1478.2 707.3 L1486.6 711.9 L1478.2 716.5 Z" fill="#474747"/><path d="M1478.2 732.4 L1486.6 737.0 L1478.2 741.6 Z" fill="#474747"/></svg>
</div>
<svg style="left:0;top:0" width="1600" height="852" fill="none" stroke-linecap="round" stroke-linejoin="round">
  <!-- browser nav -->
  <path d="M18.4 25.1 H29.6 M23.6 19.9 L18.4 25.1 L23.6 30.4" stroke="#474747" stroke-width="1.7"/>
  <path d="M55.2 25.1 H66.6 M61.3 19.9 L66.6 25.1 L61.3 30.4" stroke="#a0a0a0" stroke-width="1.7"/>
  <path d="M104.9 22.3 A6 6 0 1 0 105.6 26.3" stroke="#474747" stroke-width="1.8"/>
  <path d="M101.6 19.6 H105.6 V23.6" stroke="#474747" stroke-width="1.8" stroke-linecap="butt" stroke-linejoin="miter"/>
  <!-- tune icon -->
  <circle cx="141.3" cy="21.8" r="1.6" stroke="#303030" stroke-width="1.5"/>
  <path d="M145.6 21.8 H150.7 M139.3 28.9 H144.2" stroke="#303030" stroke-width="1.6"/>
  <circle cx="148.9" cy="28.9" r="1.7" stroke="#303030" stroke-width="1.5"/>
  <!-- zoom -->
  <circle cx="1450" cy="23" r="4.9" stroke="#303030" stroke-width="1.7"/>
  <path d="M1453.8 26.8 L1458.4 31.4" stroke="#303030" stroke-width="1.8"/>
  <path d="M1450 20.9 V25.1 M1447.9 23 H1452.1" stroke="#303030" stroke-width="1.3"/>
  <!-- star -->
  <path d="M1485.6 17.2 L1487.8 22.1 L1493 22.5 L1489 26 L1490.3 31.6 L1485.6 28.5 L1480.9 31.6 L1482.2 26 L1478.2 22.5 L1483.4 22.1 Z" stroke="#303030" stroke-width="1.7"/>
  <!-- avatar -->
  <circle cx="1538.5" cy="25.4" r="10.5" fill="#f8bad0"/>
  <path d="M1529.4 23.4 H1547.6" stroke="#3a3a3a" stroke-width="0.9"/>
  <circle cx="1533.9" cy="25.5" r="3.6" fill="#6d737b" stroke="#3a3a3a" stroke-width="0.9"/>
  <circle cx="1543" cy="25.5" r="3.6" fill="#6d737b" stroke="#3a3a3a" stroke-width="0.9"/>
  <circle cx="1534.6" cy="25.9" r="1.7" fill="#a3aab3" />
  <circle cx="1543.7" cy="25.9" r="1.7" fill="#a3aab3" />
  <!-- kebab -->
  <circle cx="1576.7" cy="19.3" r="1.7" fill="#303030"/><circle cx="1576.7" cy="25.2" r="1.7" fill="#303030"/><circle cx="1576.7" cy="31" r="1.7" fill="#303030"/>
  <!-- logo -->
  <path d="M109.8 94.3 L103.7 90.8 V76.7 L115 70.6 L126.3 76.9 V82.8" stroke="#111" stroke-width="3.1" stroke-linecap="butt" stroke-linejoin="miter"/>
  <path d="M108.9 82.9 L111.9 80.9 L126.5 88.5" stroke="#111" stroke-width="3.1" stroke-linecap="round" stroke-linejoin="miter"/>
  <path d="M114.8 82.6 V97" stroke="#111" stroke-width="3.1" stroke-linecap="round"/>
  <!-- nav chevrons -->
  <path d="M405.7 83.1 L409.6 86.9 L413.5 83.1" stroke="#5a5a5a" stroke-width="1.5"/>
  <path d="M538.2 83.1 L542.1 86.9 L546.0 83.1" stroke="#5a5a5a" stroke-width="1.5"/>
  <path d="M673.6 83.1 L677.5 86.9 L681.4 83.1" stroke="#5a5a5a" stroke-width="1.5"/>
  <path d="M813.6 83.1 L817.5 86.9 L821.4 83.1" stroke="#5a5a5a" stroke-width="1.5"/>
  <!-- chat bubble -->
  <path d="M1524.5 392.5 H1523.6 A2.6 2.6 0 0 1 1521 389.9 V380.2 A2.6 2.6 0 0 1 1523.6 377.6 H1538.8 A2.6 2.6 0 0 1 1541.4 380.2 V389.9 A2.6 2.6 0 0 1 1538.8 392.5 H1529.8 Q1528.2 392.6 1526.6 395.8" stroke="#b0b0b0" stroke-width="2.4" stroke-linecap="round"/>
  <rect x="1525.2" y="383.5" width="2.9" height="2.9" fill="#d0d0d0"/>
  <rect x="1529.8" y="383.5" width="2.9" height="2.9" fill="#d0d0d0"/>
  <rect x="1534.4" y="383.5" width="2.9" height="2.9" fill="#d0d0d0"/>
  <!-- devtools: inspect -->
  <g fill="#333">
    <rect x="14.5" y="475.9" width="2" height="2"/><rect x="19.5" y="475.9" width="2" height="2"/><rect x="24.2" y="475.9" width="2" height="2"/><rect x="29.2" y="475.9" width="2" height="2"/><rect x="34.4" y="475.9" width="2" height="2"/>
    <rect x="14.5" y="480.9" width="2" height="2"/><rect x="14.5" y="485.9" width="2" height="2"/><rect x="14.5" y="490.9" width="2" height="2"/><rect x="14.5" y="495.9" width="2" height="2"/>
    <rect x="34.4" y="480.9" width="2" height="2"/><rect x="19.5" y="495.9" width="2" height="2"/>
  </g>
  <path d="M36 486.6 H25 V497.4 M25.3 486.9 L35.3 496.8" stroke="#3c3c3c" stroke-width="2" stroke-linecap="butt" stroke-linejoin="miter"/>
  <!-- device -->
  <path d="M80.8 478.8 H61.4 V495 M57.4 495 H69.3" stroke="#3c3c3c" stroke-width="2" stroke-linecap="butt" stroke-linejoin="miter"/>
  <rect x="73.6" y="483.1" width="8.1" height="12.2" rx="1" stroke="#3c3c3c" stroke-width="2"/>
  <path d="M99.3 474.5 V499.4" stroke="#d3e3fd" stroke-width="1"/>
  <!-- >> -->
  <path d="M1241 480 L1247.8 486.8 L1241 493.6 M1250.4 480 L1257.2 486.8 L1250.4 493.6" stroke="#5f5f5f" stroke-width="2" stroke-linecap="butt" stroke-linejoin="miter"/>
  <!-- error -->
  <circle cx="1285.6" cy="488" r="8.7" fill="#dc362e"/>
  <path d="M1282.4 484.8 L1288.8 491.2 M1288.8 484.8 L1282.4 491.2" stroke="#fff" stroke-width="1.8" stroke-linecap="butt"/>
  <!-- warning -->
  <path d="M1334.8 479.6 L1345 495.8 H1324.6 Z" fill="#e8711f" stroke="#e8711f" stroke-width="0.6" stroke-linejoin="round"/>
  <path d="M1334.8 484.8 V490" stroke="#fff" stroke-width="1.9" stroke-linecap="butt"/>
  <rect x="1333.85" y="491.3" width="1.9" height="1.9" fill="#fff"/>
  <!-- issue -->
  <path d="M1404.5 481.7 H1418.7 A0.6 0.6 0 0 1 1419.3 482.3 V494 A0.6 0.6 0 0 1 1418.7 494.6 H1406.8 L1403.8 497.5 V482.4 A0.7 0.7 0 0 1 1404.5 481.7 Z" fill="#dc362e"/>
  <path d="M1409.5 486 L1413.5 490 M1413.5 486 L1409.5 490" stroke="#fff" stroke-width="1.6" stroke-linecap="butt"/>
  <path d="M1456.3 474.4 V499.3" stroke="#d3e3fd" stroke-width="1"/>
  <!-- gear -->
  <path d="M1482.83 479.63 L1483.14 476.81 L1488.26 476.81 L1488.57 479.63 L1490.73 480.88 L1493.33 479.74 L1495.89 484.18 L1493.60 485.85 L1493.60 488.35 L1495.89 490.02 L1493.33 494.46 L1490.73 493.32 L1488.57 494.57 L1488.26 497.39 L1483.14 497.39 L1482.83 494.57 L1480.67 493.32 L1478.07 494.46 L1475.51 490.02 L1477.80 488.35 L1477.80 485.85 L1475.51 484.18 L1478.07 479.74 L1480.67 480.88 Z" stroke="#474747" stroke-width="2"/>
  <circle cx="1485.7" cy="487.1" r="3.6" fill="#474747"/>
  <!-- kebab dt -->
  <circle cx="1530" cy="479.8" r="2.1" fill="#474747"/><circle cx="1530" cy="487" r="2.1" fill="#474747"/><circle cx="1530" cy="494.1" r="2.1" fill="#474747"/>
  <!-- close -->
  <path d="M1564.3 480.1 L1578.7 493.5 M1578.7 480.1 L1564.3 493.5" stroke="#474747" stroke-width="2" stroke-linecap="butt"/>
  <!-- right panel >> -->
  <path d="M1477.5 523.5 L1483.8 529.8 L1477.5 536.1 M1486.8 523.5 L1493.1 529.8 L1486.8 536.1" stroke="#5f5f5f" stroke-width="2" stroke-linecap="butt" stroke-linejoin="miter"/>
</svg>
<svg style="left:0;top:0" width="1600" height="852"><path d="M1600 838.5 V849 H1590 A10 10 0 0 0 1600 838.5 Z" fill="#242424"/></svg>
</body></html>
